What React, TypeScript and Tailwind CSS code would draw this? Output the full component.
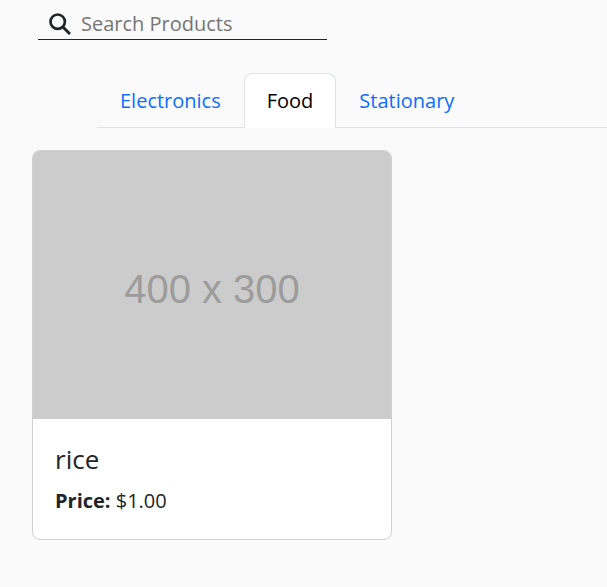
import { useState } from "react";

const tabs = ["Electronics", "Food", "Stationary"];

function SearchBar() {
  return (
    <label className="ml-[38px] flex h-10 w-[289px] items-center gap-[10px] border-b border-[#212529] pt-2 pl-[11px]">
      <svg viewBox="0 0 22 22" className="size-[22px] shrink-0" fill="none" stroke="#212529" strokeWidth="2.7" aria-hidden="true">
        <circle cx="8.700" cy="8.700" r="7.200" />
        <path d="M13.700 13.700L21 21" strokeWidth="3" />
      </svg>
      <input
        type="text"
        aria-label="Search Products"
        placeholder="Search Products"
        className="w-full min-w-0 bg-transparent text-[20px] leading-7 outline-none placeholder:text-[#757575]"
      />
    </label>
  );
}

export default function App() {
  const [active, setActive] = useState("Food");
  return (
    <div className="min-h-screen bg-[#fafafa] font-['Open_Sans','Noto_Sans',sans-serif] text-[#212529]">
      <SearchBar />
      <div role="tablist" className="mt-[33px] ml-[97px] flex border-b border-[#dee2e6]">
        {tabs.map((tab) => (
          <button
            key={tab}
            role="tab"
            type="button"
            aria-selected={tab === active}
            onClick={() => setActive(tab)}
            className={`-mb-px h-[55px] rounded-t-lg border px-[22px] pt-px text-[20px] ${
              tab === active
                ? "border-[#dee2e6] border-b-white bg-white text-black"
                : "border-transparent text-[#0d6efd]"
            }`}
          >
            {tab}
          </button>
        ))}
      </div>
      <main className="mt-[22px] px-8">
        <article className="w-[360px] max-w-full overflow-hidden rounded-lg border border-[#d0d0d0] bg-white">
          <div className="flex h-[268px] items-center justify-center bg-[#cccccc] pt-2 font-['Liberation_Sans',sans-serif] text-[40px] text-[#9c9c9c]">
            400 x 300
          </div>
          <div className="px-[22px] pt-6 pb-5">
            <h5 className="text-[26px] leading-8 font-medium">rice</h5>
            <p className="mt-2 text-[20px] leading-9">
              <strong>Price:</strong> $1.00
            </p>
          </div>
        </article>
      </main>
    </div>
  );
}
